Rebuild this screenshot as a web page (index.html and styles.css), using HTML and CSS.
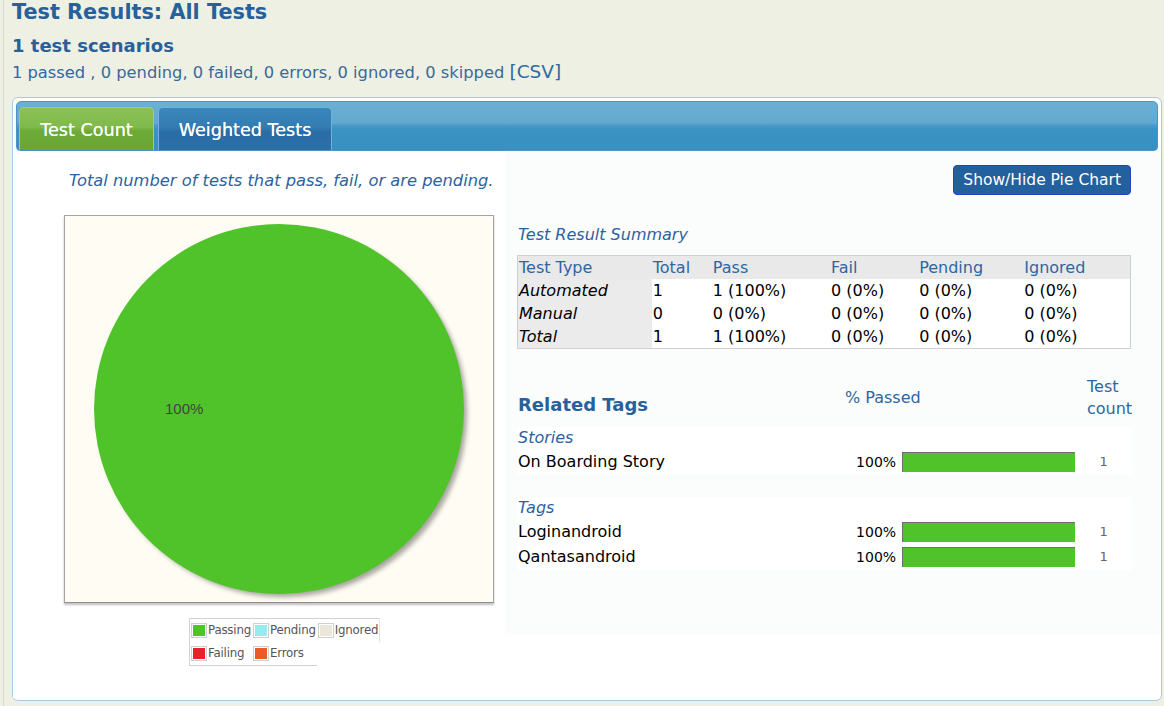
FILE: index.html
```html
<!DOCTYPE html>
<html lang="en">
<head>
<meta charset="utf-8">
<title>Test Results: All Tests</title>
<link rel="stylesheet" href="styles.css">
</head>
<body>
<div class="page">
  <h1 class="title">Test Results: All Tests</h1>
  <h2 class="subtitle">1 test scenarios</h2>
  <p class="counts"><a class="link" href="#">1 passed</a> , 0 pending, 0 failed, 0 errors, 0 ignored, 0 skipped <a class="link csv" href="#">[CSV]</a></p>

  <div class="panel">
    <div class="tabbar">
      <div class="tab tab-active">Test Count</div>
      <div class="tab tab-other">Weighted Tests</div>
    </div>
    <div class="content">
      <div class="left">
        <p class="desc">Total number of tests that pass, fail, or are pending.</p>
        <div class="chartbox">
          <svg class="pie" width="428" height="386" viewBox="0 0 428 386">
            <defs>
              <filter id="blur" x="-10%" y="-10%" width="120%" height="120%">
                <feGaussianBlur stdDeviation="2.5"/>
              </filter>
            </defs>
            <circle cx="218" cy="197" r="184" fill="#000" opacity="0.35" filter="url(#blur)"/>
            <circle cx="214" cy="193" r="185" fill="#50c32a"/>
            <text x="100" y="198" class="pie-label">100%</text>
          </svg>
        </div>
        <table class="legend">
          <tr class="lg-row1">
            <td class="sw-cell"><span class="sw sw-pass"></span></td><td class="lg-label">Passing</td>
            <td class="sw-cell"><span class="sw sw-pend"></span></td><td class="lg-label">Pending</td>
            <td class="sw-cell"><span class="sw sw-ign"></span></td><td class="lg-label lg-last">Ignored</td>
          </tr>
          <tr class="lg-row2">
            <td class="sw-cell"><span class="sw sw-fail"></span></td><td class="lg-label">Failing</td>
            <td class="sw-cell"><span class="sw sw-err"></span></td><td class="lg-label">Errors</td>
            <td class="empty"></td><td class="empty"></td>
          </tr>
        </table>
      </div>

      <div class="right">
        <div class="btnrow"><button class="btn">Show/Hide Pie Chart</button></div>
        <div class="sum-title">Test Result Summary</div>
        <table class="summary">
          <colgroup>
            <col class="c1"><col class="c2"><col class="c3"><col class="c4"><col class="c5"><col class="c6">
          </colgroup>
          <tr class="head">
            <td>Test Type</td><td>Total</td><td>Pass</td><td>Fail</td><td>Pending</td><td>Ignored</td>
          </tr>
          <tr>
            <td class="type">Automated</td><td>1</td><td>1 (100%)</td><td>0 (0%)</td><td>0 (0%)</td><td>0 (0%)</td>
          </tr>
          <tr>
            <td class="type">Manual</td><td>0</td><td>0 (0%)</td><td>0 (0%)</td><td>0 (0%)</td><td>0 (0%)</td>
          </tr>
          <tr>
            <td class="type">Total</td><td>1</td><td>1 (100%)</td><td>0 (0%)</td><td>0 (0%)</td><td>0 (0%)</td>
          </tr>
        </table>

        <div class="tags-head">
          <h3 class="tags-title">Related Tags</h3>
          <div class="pct-head">% Passed</div>
          <div class="count-head">Test<br>count</div>
        </div>

        <div class="group">
          <div class="group-title">Stories</div>
          <div class="tag-row">
            <span class="tag-name">On Boarding Story</span>
            <span class="tag-pct">100%</span>
            <span class="bar"><span class="bar-fill" style="width:100%"></span></span>
            <span class="tag-count">1</span>
          </div>
        </div>

        <div class="group">
          <div class="group-title">Tags</div>
          <div class="tag-row">
            <span class="tag-name">Loginandroid</span>
            <span class="tag-pct">100%</span>
            <span class="bar"><span class="bar-fill" style="width:100%"></span></span>
            <span class="tag-count">1</span>
          </div>
          <div class="tag-row">
            <span class="tag-name">Qantasandroid</span>
            <span class="tag-pct">100%</span>
            <span class="bar"><span class="bar-fill" style="width:100%"></span></span>
            <span class="tag-count">1</span>
          </div>
        </div>
      </div>
    </div>
  </div>
</div>
</body>
</html>
```

FILE: styles.css
```css
html, body {
  margin: 0;
  padding: 0;
}
body {
  background: #eef0e3;
  font-family: "DejaVu Sans", Verdana, sans-serif;
  color: #2b5f94;
  height: 706px;
  overflow: hidden;
}
.page {
  margin-left: 3px;
  border-left: 1px solid #d8dbcb;
  padding-left: 8px;
  height: 706px;
  box-sizing: border-box;
}
.title {
  margin: 0;
  font-size: 20.8px;
  line-height: 24px;
  font-weight: bold;
  color: #27609a;
}
.subtitle {
  margin: 11px 0 0;
  font-size: 18px;
  line-height: 22px;
  font-weight: bold;
  color: #27609a;
}
.counts {
  margin: 5px 0 0;
  font-size: 16.3px;
  line-height: 20px;
  color: #3a6a97;
}
.link {
  color: #2c6aa8;
  text-decoration: none;
}
.csv {
  font-size: 18.5px;
}

.panel {
  margin-top: 14px;
  width: 1150px;
  box-sizing: border-box;
  border: 1px solid #a9c9e0;
  border-radius: 6px;
  background: #ffffff;
  padding: 3px 3px 0 3px;
  height: 604px;
}
.tabbar {
  height: 50px;
  box-sizing: border-box;
  border: 1px solid #4d94c6;
  border-radius: 5px 5px 4px 4px;
  background: linear-gradient(180deg, #6cb0d3 0%, #62a9cf 44%, #4c9bc8 48%, #3b93c3 56%, #3890c1 100%);
  display: flex;
  align-items: flex-end;
  gap: 4px;
  padding-left: 2px;
}
.tab {
  height: 43px;
  box-sizing: border-box;
  display: flex;
  align-items: center;
  justify-content: center;
  color: #ffffff;
  font-size: 17.6px;
  border-radius: 5px 5px 0 0;
  padding-top: 1px;
  text-shadow: 0 0 0.6px #ffffff;
}
.tab-active {
  width: 135px;
  border: 1px solid #9fd068;
  border-bottom: none;
  background: linear-gradient(180deg, #8bc156 0%, #80ba4b 45%, #6eaa37 55%, #68a632 100%);
}
.tab-other {
  width: 174px;
  border: 1px solid #6fb1e0;
  border-bottom: none;
  background: linear-gradient(180deg, #3b87bb 0%, #327cb2 45%, #2a6da6 58%, #2c70a8 100%);
}

.content {
  display: grid;
  grid-template-columns: 492px 1fr;
  margin: 0 -3px;
}
.left {
  padding-left: 51px;
  padding-bottom: 32px;
  background: #ffffff;
}
.desc {
  margin: 20px 0 0 5px;
  font-size: 16.3px;
  line-height: 20px;
  font-style: italic;
  color: #2d62a0;
}
.chartbox {
  margin-top: 24px;
  width: 430px;
  height: 388px;
  box-sizing: border-box;
  border: 1px solid #a3a3a3;
  border-bottom-color: #8f8f8f;
  background: #fffcf4;
  box-shadow: 0 2px 2px rgba(0, 0, 0, 0.25);
}
.pie {
  display: block;
}
.pie-label {
  font-family: "Liberation Sans", Arial, sans-serif;
  font-size: 15px;
  fill: #444444;
}

.legend {
  margin: 15px 0 0 125px;
  border-collapse: collapse;
  border-top: 1px solid #d2d2d2;
  border-left: 1px solid #d2d2d2;
  font-size: 11.8px;
  letter-spacing: -0.2px;
  color: #555555;
  background: #ffffff;
}
.legend td {
  height: 23px;
  padding: 0;
  vertical-align: middle;
}
.lg-row1 .lg-last {
  border-right: 1px solid #e3e3e3;
}
.lg-row2 td {
  border-bottom: 1px solid #d2d2d2;
}
.lg-row2 td.empty {
  border-bottom: none;
}
.sw-cell {
  padding: 0 1px 0 1px !important;
}
.sw {
  display: block;
  width: 12px;
  height: 11px;
  border: 1px solid #cfcfcf;
  padding: 1px;
  background-clip: content-box;
}
.lg-label {
  padding-right: 1px !important;
  line-height: 1;
}
.sw-pass { background-color: #4fc32a; }
.sw-pend { background-color: #95ecef; }
.sw-ign { background-color: #ebe7d8; }
.sw-fail { background-color: #e8212b; }
.sw-err { background-color: #ee5a27; }

.right {
  padding: 0 29px 0 12px;
  background: #fbfcfc;
  height: 484px;
}
.btnrow {
  margin-top: 14px;
  display: flex;
  justify-content: flex-end;
}
.btn {
  height: 30px;
  width: 178px;
  margin-right: 1px;
  box-sizing: border-box;
  border: 1px solid #2240d0;
  border-radius: 4px;
  background: #23609e;
  color: #ffffff;
  font-family: "DejaVu Sans", Verdana, sans-serif;
  font-size: 15.5px;
  padding: 0;
}
.sum-title {
  margin-top: 30px;
  font-size: 16px;
  line-height: 20px;
  font-style: italic;
  color: #2d62a0;
  padding-left: 1px;
}
.summary {
  margin-top: 10px;
  width: 614px;
  border-collapse: collapse;
  border: 1px solid #cfcfcf;
  table-layout: fixed;
  font-size: 16px;
  color: #000000;
  background: #ffffff;
}
.summary td {
  height: 23px;
  padding: 0 0 0 1px;
  line-height: 23px;
  white-space: nowrap;
}
.c1 { width: 134px; }
.c2 { width: 60px; }
.c3 { width: 118px; }
.c4 { width: 88px; }
.c5 { width: 105px; }
.c6 { width: 107px; }
.summary .head td {
  background: #e9e9e9;
  color: #2d66a1;
}
.summary .type {
  background: #ebebeb;
  font-style: italic;
}

.tags-head {
  margin-top: 28px;
  height: 48px;
  display: flex;
}
.tags-title {
  margin: 17px 0 0 0;
  width: 327px;
  font-size: 18px;
  line-height: 22px;
  font-weight: bold;
  color: #27609a;
  padding-left: 1px;
}
.pct-head {
  margin-top: 10px;
  width: 242px;
  font-size: 16px;
  line-height: 22px;
  color: #2d66a1;
}
.count-head {
  margin-top: -1px;
  font-size: 16px;
  line-height: 22px;
  color: #2d66a1;
}
.group {
  margin-top: 2px;
  background: #ffffff;
  padding-bottom: 1px;
}
.group + .group {
  margin-top: 22px;
}
.group-title {
  font-size: 16px;
  line-height: 22px;
  font-style: italic;
  color: #2d62a0;
  padding-left: 1px;
}
.tag-row {
  display: grid;
  grid-template-columns: 1fr 55px 179px 57px;
  align-items: center;
  height: 25px;
}
.tag-name {
  font-size: 16px;
  color: #000000;
  padding-left: 1px;
}
.tag-pct {
  font-size: 14px;
  color: #000000;
  text-align: right;
}
.bar {
  margin-left: 6px;
  height: 20px;
  display: block;
  background: #ffffff;
}
.bar-fill {
  display: block;
  height: 100%;
  background: #50c32a;
  box-shadow: inset 1px 1px 0 #6d6d6d;
}
.tag-count {
  text-align: center;
  font-size: 13px;
  color: #666666;
}
```
